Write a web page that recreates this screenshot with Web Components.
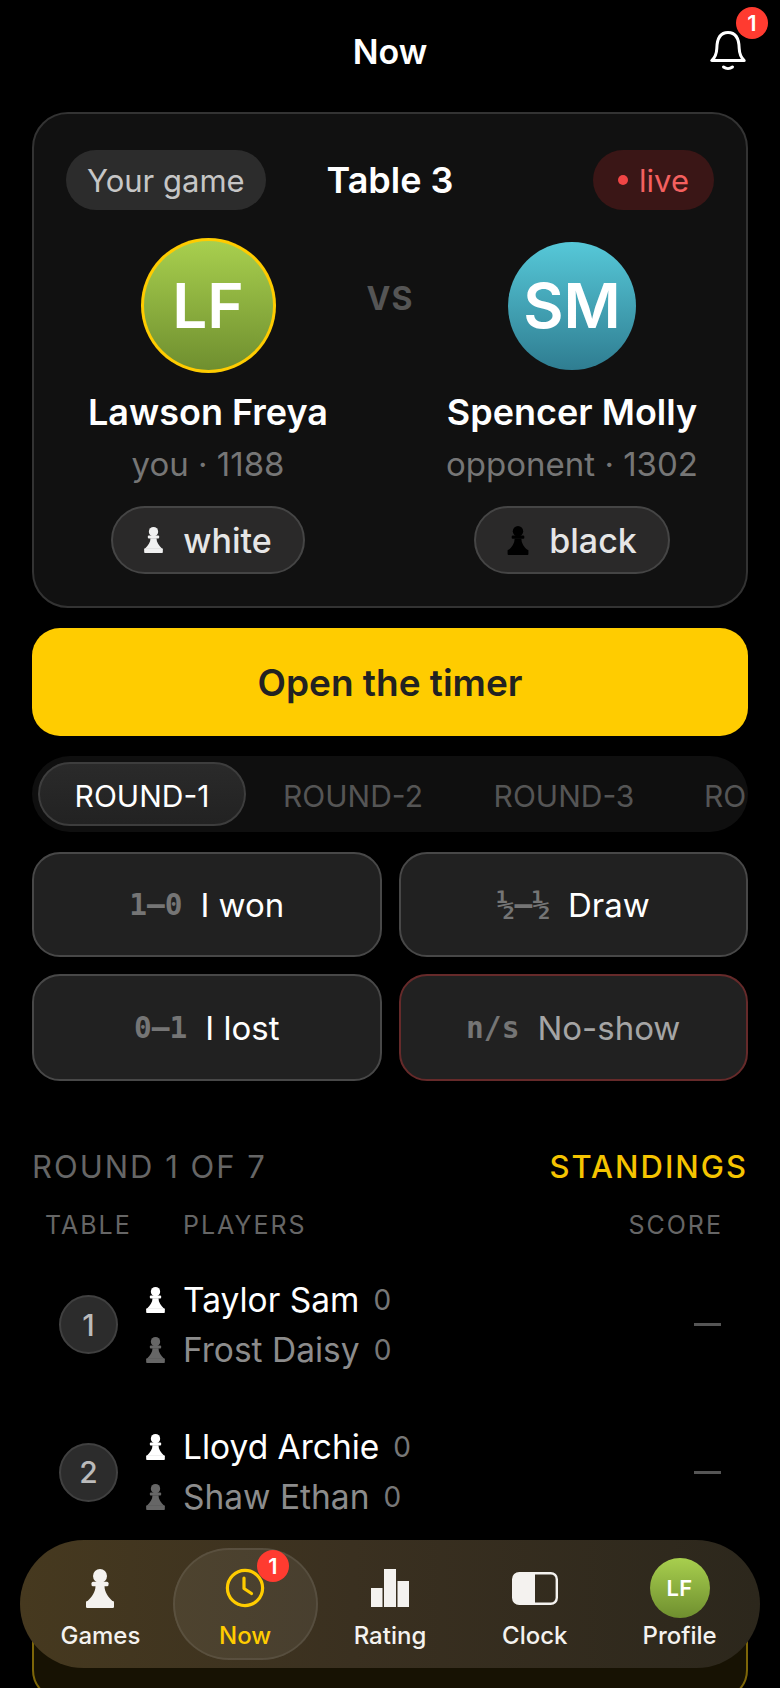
<!DOCTYPE html>
<html lang="en">
<head>
<meta charset="utf-8">
<title>Now</title>
<style>
  html, body { margin: 0; background: #000; }
  body { width: 780px; height: 1688px; overflow: hidden; position: relative; font-family: Inter, "Noto Sans", sans-serif; color: #fff; }
</style>
</head>
<body>
<app-header></app-header>
<main-column>
  <game-card></game-card>
  <timer-button>Open the timer</timer-button>
  <round-tabs></round-tabs>
  <result-grid>
    <result-button code="1–0">I won</result-button>
    <result-button code="½–½">Draw</result-button>
    <result-button code="0–1">I lost</result-button>
    <result-button code="n/s" danger>No-show</result-button>
  </result-grid>
  <section-head></section-head>
  <match-row num="1" white="Taylor Sam" black="Frost Daisy"></match-row>
  <match-row num="2" white="Lloyd Archie" black="Shaw Ethan"></match-row>
  <own-row></own-row>
</main-column>
<bottom-nav>
  <nav-item label="Games"><chess-pawn style="width:28px;height:39px;color:#f4f2ef"></chess-pawn></nav-item>
  <nav-item label="Now" active badge="1">
    <svg width="40" height="40" viewBox="0 0 40 40" fill="none" stroke="#ffcc00" stroke-width="3.2" stroke-linecap="round" stroke-linejoin="round"><circle cx="20" cy="20" r="17.6"/><path d="M19 10v10.500l7.500 5"/></svg>
  </nav-item>
  <nav-item label="Rating">
    <svg width="38" height="38" viewBox="0 0 38 38" fill="#f4f2ef"><rect x="0" y="19" width="11.500" height="19"/><rect x="13" y="0" width="12" height="38"/><rect x="26.500" y="12" width="11.500" height="26"/></svg>
  </nav-item>
  <nav-item label="Clock">
    <svg width="46" height="33" viewBox="0 0 46 33" fill="none"><rect x="1.200" y="1.200" width="43.600" height="30.600" rx="6" stroke="#f4f2ef" stroke-width="2.400"/><path d="M7 1.200h16v30.600H7a5.800 5.800 0 0 1-5.800-5.800V7A5.800 5.800 0 0 1 7 1.200z" fill="#f4f2ef"/></svg>
  </nav-item>
  <nav-item label="Profile"><div style="width:60px;height:60px;border-radius:50%;background:linear-gradient(#a8cf4e,#6f8f2f);display:flex;align-items:center;justify-content:center;font-size:22px;font-weight:600;letter-spacing:.5px;color:#fff">LF</div></nav-item>
</bottom-nav>

<script>
class ChessPawn extends HTMLElement {
  constructor () {
    super()
    this.attachShadow({ mode: 'open' }).innerHTML = `
      <style>
        :host { display: inline-block; width: 19px; height: 26px; color: #fff; flex: none; }
        svg { display: block; width: 100%; height: 100%; fill: currentColor; }
      </style>
      <svg viewBox="0 0 28 39">
        <circle cx="14" cy="7" r="7"/>
        <rect x="5.500" y="12.800" width="17" height="4.400" rx="1.500"/>
        <path d="M9.500 17c0 6-3.500 11-8.500 15.500h26C22 28 18.500 23 18.500 17z"/>
        <rect x="0" y="32" width="28" height="7" rx="1.200"/>
      </svg>`
  }
}

class AppHeader extends HTMLElement {
  constructor () {
    super()
    this.attachShadow({ mode: 'open' }).innerHTML = `
      <style>
        :host { display: grid; grid-template-columns: 1fr auto 1fr; align-items: start; height: 102px; padding: 0 34px; box-sizing: border-box; }
        h1 { grid-column: 2; margin: 32px 0 0; font-size: 34px; line-height: 40px; font-weight: 600; }
        .bell { grid-column: 3; justify-self: end; position: relative; width: 36px; height: 40px; margin-top: 31px; }
        svg { display: block; }
        .badge { position: absolute; left: 26px; top: -24px; width: 32px; height: 32px; border-radius: 50%; background: #ff3b30; font-size: 22px; font-weight: 600; display: flex; align-items: center; justify-content: center; }
      </style>
      <h1>Now</h1>
      <div class="bell">
        <svg width="36" height="40" viewBox="0 0 36 40" fill="none" stroke="#fff" stroke-width="3" stroke-linecap="round" stroke-linejoin="round">
          <path d="M1.800 29.500h32.400c-3.600-3.400-4.800-6.500-5-12C29 7 25 1.500 18 1.500S7 7 6.800 17.500c-.2 5.500-1.400 8.600-5 12z"/>
          <path d="M13.500 36c2.600 2 6.400 2 9 0"/>
        </svg>
        <span class="badge">1</span>
      </div>`
  }
}

class MainColumn extends HTMLElement {
  constructor () {
    super()
    this.attachShadow({ mode: 'open' }).innerHTML = `
      <style>:host { display: block; padding: 10px 32px 0; }</style>
      <slot></slot>`
  }
}

class PlayerBlock extends HTMLElement {
  constructor () {
    super()
    const you = this.hasAttribute('you')
    this.attachShadow({ mode: 'open' }).innerHTML = `
      <style>
        :host { display: flex; flex-direction: column; align-items: center; }
        .slot { height: 135px; display: flex; align-items: center; justify-content: center; }
        .avatar { box-sizing: border-box; width: 128px; height: 128px; border-radius: 50%; display: flex; align-items: center; justify-content: center; font-size: 62px; font-weight: 600; background: linear-gradient(#56c8d8, #2f7d91); }
        .you { width: 135px; height: 135px; background: linear-gradient(#a8cf4e, #6f8f2f) padding-box, #ffcc00; border: 3.500px solid transparent; }
        .name { margin-top: 16px; font-size: 36px; line-height: 46px; font-weight: 600; white-space: nowrap; }
        .sub { margin-top: 9px; font-size: 33px; line-height: 40px; color: #767676; white-space: nowrap; }
        .chip { margin-top: 22px; box-sizing: border-box; height: 68px; padding: 0 31px; display: flex; align-items: center; gap: 20px; border-radius: 34px; background: #2a2929; border: 2px solid #454545; font-size: 34px; font-weight: 500; color: #e6e6e6; }
        .black { width: 22px; height: 29px; }
      </style>
      <div class="slot"><div class="avatar ${you ? 'you' : ''}">${this.getAttribute('initials')}</div></div>
      <div class="name">${this.getAttribute('name')}</div>
      <div class="sub">${this.getAttribute('sub')}</div>
      <div class="chip"><chess-pawn class="${you ? '' : 'black'}" style="color:${you ? '#f0f0f0' : '#000'}"></chess-pawn>${you ? 'white' : 'black'}</div>`
  }
}

class GameCard extends HTMLElement {
  constructor () {
    super()
    this.attachShadow({ mode: 'open' }).innerHTML = `
      <style>
        :host { display: block; box-sizing: border-box; height: 496px; padding: 36px 32px 0; border-radius: 36px; background: #111; border: 2px solid #333; }
        .top { display: grid; grid-template-columns: 1fr auto 1fr; align-items: center; height: 60px; }
        .pill { height: 60px; box-sizing: border-box; border-radius: 30px; display: flex; align-items: center; font-size: 31px; }
        .game { justify-self: start; padding: 0 21px; background: #2c2c2c; color: #c6c6c6; }
        .live { justify-self: end; padding: 0 25px; gap: 11px; background: #3a1616; color: #f4605f; }
        .live i { width: 10px; height: 10px; border-radius: 50%; background: #f04545; }
        h2 { margin: 0; font-size: 36px; font-weight: 600; }
        .players { display: grid; grid-template-columns: 284px 80px 284px; margin-top: 28px; }
        .vs { text-align: center; font-size: 32px; font-weight: 700; letter-spacing: 1px; color: #555; margin-top: 43px; line-height: 36px; }
      </style>
      <div class="top">
        <span class="pill game">Your game</span>
        <h2>Table 3</h2>
        <span class="pill live"><i></i>live</span>
      </div>
      <div class="players">
        <player-block you initials="LF" name="Lawson Freya" sub="you · 1188"></player-block>
        <div class="vs">VS</div>
        <player-block initials="SM" name="Spencer Molly" sub="opponent · 1302"></player-block>
      </div>`
  }
}

class TimerButton extends HTMLElement {
  constructor () {
    super()
    this.attachShadow({ mode: 'open' }).innerHTML = `
      <style>
        :host { display: flex; align-items: center; justify-content: center; height: 108px; margin-top: 20px; border-radius: 28px; background: #ffcc00; color: #222; font-size: 37px; font-weight: 600; }
      </style>
      <slot></slot>`
  }
}

class RoundTabs extends HTMLElement {
  constructor () {
    super()
    const tabs = [1, 2, 3, 4].map((n, i) => `<span class="tab ${i === 0 ? 'on' : ''}">ROUND-${n}</span>`).join('')
    this.attachShadow({ mode: 'open' }).innerHTML = `
      <style>
        :host { display: flex; gap: 3px; box-sizing: border-box; height: 76px; margin-top: 20px; padding: 6px; border-radius: 38px; background: #0f0f0f; overflow: hidden; }
        .tab { flex: none; box-sizing: border-box; width: 208px; height: 64px; padding-top: 3px; border-radius: 32px; display: flex; align-items: center; justify-content: center; font-size: 30px; font-weight: 400; color: #555; border: 2px solid transparent; }
        .on { color: #fff; background: linear-gradient(#2a2a2a, #222); border-color: #3d3d3d; }
      </style>
      ${tabs}`
  }
}

class ResultGrid extends HTMLElement {
  constructor () {
    super()
    this.attachShadow({ mode: 'open' }).innerHTML = `
      <style>:host { display: grid; grid-template-columns: 1fr 1fr; grid-template-rows: 105px 107px; gap: 17px; margin-top: 20px; }</style>
      <slot></slot>`
  }
}

class ResultButton extends HTMLElement {
  constructor () {
    super()
    const danger = this.hasAttribute('danger')
    this.attachShadow({ mode: 'open' }).innerHTML = `
      <style>
        :host { display: flex; align-items: center; justify-content: center; gap: 18px; box-sizing: border-box; border-radius: 28px; background: #212121; border: 2px solid ${danger ? '#662a2a' : '#484848'}; font-size: 33px; color: ${danger ? '#a5a5a5' : '#fff'}; }
        code { font-family: "DejaVu Sans Mono", monospace; font-size: 29.500px; font-weight: 700; color: #757575; }
      </style>
      <code>${this.getAttribute('code')}</code><slot></slot>`
  }
}

class SectionHead extends HTMLElement {
  constructor () {
    super()
    this.attachShadow({ mode: 'open' }).innerHTML = `
      <style>
        :host { display: block; margin-top: 68px; }
        .title { display: flex; justify-content: space-between; font-size: 31px; line-height: 36px; letter-spacing: 2px; color: #666; }
        .link { color: #f5c400; font-weight: 500; }
        .cols { display: grid; grid-template-columns: 138px 1fr auto; margin-top: 25px; padding: 0 25px 0 13px; font-size: 25px; line-height: 30px; letter-spacing: 2px; color: #666; }
      </style>
      <div class="title"><span>ROUND 1 OF 7</span><span class="link">STANDINGS</span></div>
      <div class="cols"><span>TABLE</span><span>PLAYERS</span><span>SCORE</span></div>`
  }
}

class MatchRow extends HTMLElement {
  constructor () {
    super()
    this.attachShadow({ mode: 'open' }).innerHTML = `
      <style>
        :host { display: flex; align-items: center; box-sizing: border-box; height: 147.500px; padding: 0 27px; }
        :host(:first-of-type) { margin-top: 11px; }
        .num { box-sizing: border-box; width: 59px; height: 59px; border-radius: 50%; background: #2c2c2c; border: 2px solid #404040; color: #bbb; font-size: 30px; font-weight: 500; display: flex; align-items: center; justify-content: center; }
        .who { flex: 1; margin-left: 28px; }
        .line { display: flex; align-items: center; height: 50px; font-size: 33.500px; color: #fff; }
        .line.dim { color: #8c8c8c; }
        .line chess-pawn { margin-right: 18px; }
        .line b { font-weight: 400; font-size: 28px; color: #777; margin-left: 14px; }
        .dash { width: 27px; height: 3px; background: #555; }
      </style>
      <div class="num">${this.getAttribute('num')}</div>
      <div class="who">
        <div class="line"><chess-pawn></chess-pawn>${this.getAttribute('white')}<b>0</b></div>
        <div class="line dim"><chess-pawn style="color:#666"></chess-pawn>${this.getAttribute('black')}<b>0</b></div>
      </div>
      <div class="dash"></div>`
  }
}

class OwnRow extends HTMLElement {
  constructor () {
    super()
    this.attachShadow({ mode: 'open' }).innerHTML = `
      <style>:host { display: block; box-sizing: border-box; height: 147px; margin-top: 7px; border-radius: 30px; background: #171203; border: 2px solid #7d6608; }</style>`
  }
}

class BottomNav extends HTMLElement {
  constructor () {
    super()
    this.attachShadow({ mode: 'open' }).innerHTML = `
      <style>
        :host { position: absolute; left: 20px; bottom: 20px; width: 740px; height: 128px; box-sizing: border-box; padding: 8px; display: grid; grid-template-columns: repeat(5, 1fr); border-radius: 64px; background: linear-gradient(90deg, #46391f, #3a3020 45%, #2c271c); }
      </style>
      <slot></slot>`
  }
}

class NavItem extends HTMLElement {
  constructor () {
    super()
    const active = this.hasAttribute('active')
    const badge = this.getAttribute('badge')
    this.attachShadow({ mode: 'open' }).innerHTML = `
      <style>
        :host { display: block; position: relative; border-radius: 56px; box-sizing: border-box; ${active ? 'background: rgba(255,255,255,.07); box-shadow: inset 0 0 0 2px rgba(255,255,255,.08);' : ''} }
        .icon { height: 72px; display: flex; align-items: center; justify-content: center; padding-top: 8px; box-sizing: border-box; }
        .label { text-align: center; font-size: 24px; line-height: 30px; font-weight: 500; color: ${active ? '#ffcc00' : '#f4f2ef'}; margin-top: 1px; }
        .badge { position: absolute; left: 84px; top: 2px; width: 32px; height: 32px; border-radius: 50%; background: #ff3b30; color: #fff; font-size: 22px; font-weight: 600; display: flex; align-items: center; justify-content: center; }
      </style>
      <div class="icon"><slot></slot></div>
      <div class="label">${this.getAttribute('label')}</div>
      ${badge ? `<span class="badge">${badge}</span>` : ''}`
  }
}

customElements.define('chess-pawn', ChessPawn)
customElements.define('app-header', AppHeader)
customElements.define('main-column', MainColumn)
customElements.define('player-block', PlayerBlock)
customElements.define('game-card', GameCard)
customElements.define('timer-button', TimerButton)
customElements.define('round-tabs', RoundTabs)
customElements.define('result-grid', ResultGrid)
customElements.define('result-button', ResultButton)
customElements.define('section-head', SectionHead)
customElements.define('match-row', MatchRow)
customElements.define('own-row', OwnRow)
customElements.define('bottom-nav', BottomNav)
customElements.define('nav-item', NavItem)
</script>
</body>
</html>
